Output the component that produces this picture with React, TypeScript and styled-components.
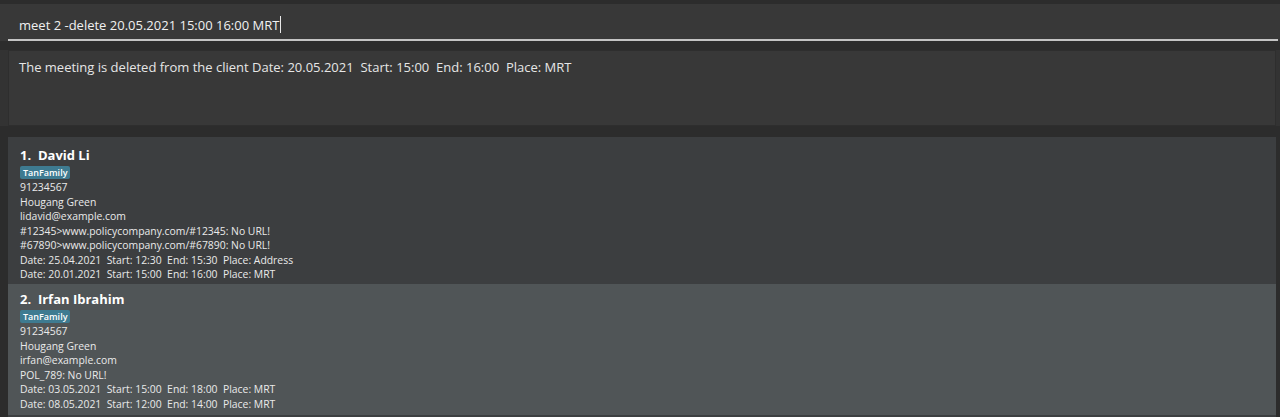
import React from 'react';
import styled, { createGlobalStyle } from 'styled-components';

const GlobalStyle = createGlobalStyle`
  html, body {
    margin: 0;
    padding: 0;
    background: #2c2c2c;
  }
  body {
    font-family: 'Open Sans', 'Noto Sans', sans-serif;
    color: #ffffff;
  }
`;

type Person = {
  name: string;
  tags: string[];
  phone: string;
  address: string;
  email: string;
  policies: string[];
  meetings: string[];
};

const persons: Person[] = [
  {
    name: 'David Li',
    tags: ['TanFamily'],
    phone: '91234567',
    address: 'Hougang Green',
    email: 'lidavid@example.com',
    policies: [
      '#12345>www.policycompany.com/#12345: No URL!',
      '#67890>www.policycompany.com/#67890: No URL!',
    ],
    meetings: [
      'Date: 25.04.2021  Start: 12:30  End: 15:30  Place: Address',
      'Date: 20.01.2021  Start: 15:00  End: 16:00  Place: MRT',
    ],
  },
  {
    name: 'Irfan Ibrahim',
    tags: ['TanFamily'],
    phone: '91234567',
    address: 'Hougang Green',
    email: 'irfan@example.com',
    policies: ['POL_789: No URL!'],
    meetings: [
      'Date: 03.05.2021  Start: 15:00  End: 18:00  Place: MRT',
      'Date: 08.05.2021  Start: 12:00  End: 14:00  Place: MRT',
    ],
  },
];

export default function App() {
  return (
    <Window>
      <GlobalStyle />
      <CommandBar>
        <CommandInput>
          meet 2 -delete 20.05.2021 15:00 16:00 MRT
          <Caret />
        </CommandInput>
      </CommandBar>
      <ResultPane>
        <ResultBox>
          The meeting is deleted from the client Date: 20.05.2021&nbsp; Start: 15:00&nbsp; End: 16:00&nbsp; Place: MRT
        </ResultBox>
      </ResultPane>
      <PersonList>
        {persons.map((p, i) => (
          <Card key={p.name} selected={i === 1}>
            <Name>
              {i + 1}.&nbsp; {p.name}
            </Name>
            <Tags>
              {p.tags.map((t) => (
                <Tag key={t}>{t}</Tag>
              ))}
            </Tags>
            <Line>{p.phone}</Line>
            <Line>{p.address}</Line>
            <Line>{p.email}</Line>
            {p.policies.map((pol) => (
              <Line key={pol}>{pol}</Line>
            ))}
            {p.meetings.map((m) => (
              <Line key={m}>{m}</Line>
            ))}
          </Card>
        ))}
      </PersonList>
    </Window>
  );
}

const Window = styled.div`
  width: 1280px;
  height: 417px;
  overflow: hidden;
  display: flex;
  flex-direction: column;
  background: #2c2c2c;
`;

const CommandBar = styled.div`
  margin-top: 4px;
  height: 37px;
  box-sizing: border-box;
  background: #383838;
  padding: 0 2px 0 8px;
  display: flex;
  align-items: stretch;
`;

const CommandInput = styled.div`
  flex: 1;
  display: flex;
  align-items: center;
  padding: 6px 0 0 11px;
  font-size: 13px;
  color: #f0f0f0;
  border-bottom: 2px solid #c4c4c4;
  white-space: pre;
`;

const Caret = styled.span`
  display: inline-block;
  width: 1px;
  height: 17px;
  background: #e8e8e8;
  margin-left: 1px;
`;

const ResultPane = styled.div`
  margin-top: 9px;
  height: 76px;
  padding: 0 4px 0 8px;
  background: #333333;
  display: flex;
`;

const ResultBox = styled.div`
  flex: 1;
  background: #383838;
  border: 1px solid #2e2e2e;
  padding: 7px 10px;
  font-size: 13px;
  color: #e6e6e6;
  white-space: pre;
`;

const PersonList = styled.div`
  margin-top: 11px;
  flex: 1;
  margin-left: 8px;
  margin-right: 4px;
  display: flex;
  flex-direction: column;
  background: #3c3f41;
`;

const Card = styled.div<{ selected?: boolean }>`
  background: ${(p) => (p.selected ? '#505557' : '#3c3e40')};
  padding: ${(p) => (p.selected ? '6px 12px 4px' : '9px 12px 4px')};
  height: ${(p) => (p.selected ? '131px' : '147px')};
  box-sizing: border-box;
`;

const Name = styled.div`
  font-size: 13px;
  font-weight: 700;
  color: #ffffff;
  line-height: 18px;
  white-space: pre;
`;

const Tags = styled.div`
  display: flex;
  gap: 4px;
  margin: 2px 0 1px;
`;

const Tag = styled.span`
  background: #3e7b91;
  color: #ffffff;
  font-size: 9px;
  font-weight: 600;
  padding: 0 3px;
  border-radius: 2px;
  line-height: 13px;
`;

const Line = styled.div`
  font-size: 10.4px;
  color: #eaeaea;
  line-height: 14.5px;
  white-space: pre;
`;
